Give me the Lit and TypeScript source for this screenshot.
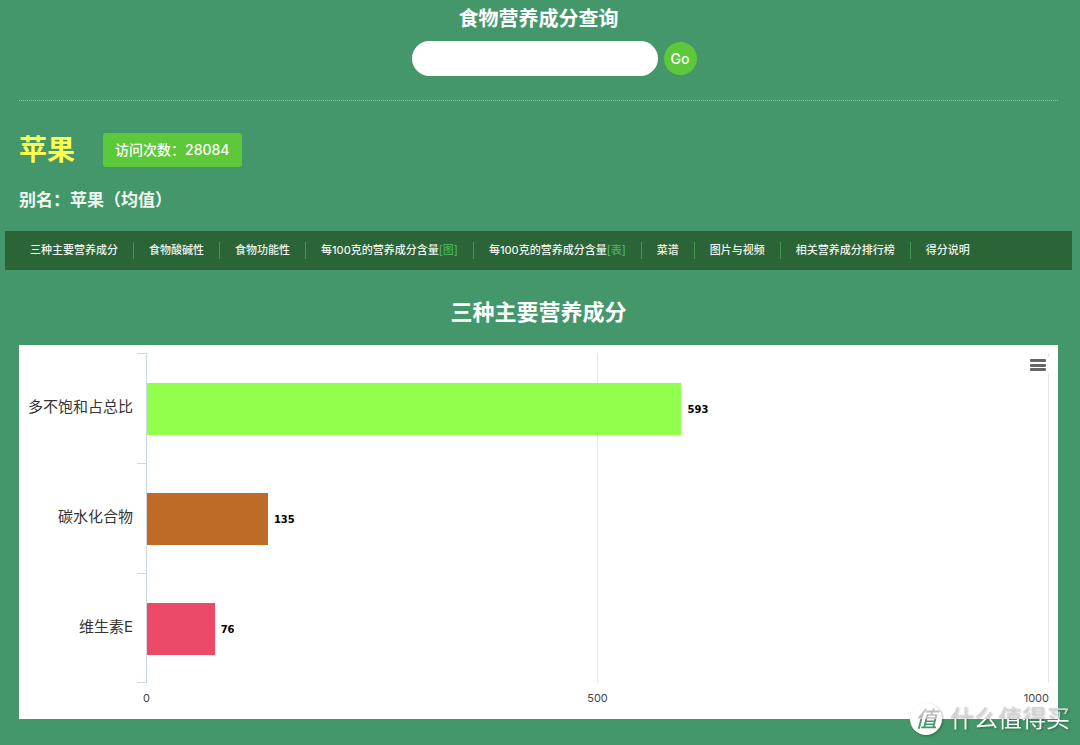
import { LitElement, html, css, svg } from "lit";
import { customElement, property } from "lit/decorators.js";
import { styleMap } from "lit/directives/style-map.js";

interface Bar {
  label: string;
  value: number;
  color: string;
}

interface NavLink {
  text: string;
  tag?: string;
  href: string;
}

@customElement("nutrient-chart")
class NutrientChart extends LitElement {
  @property({ attribute: false }) bars: Bar[] = [];
  @property({ type: Number }) max = 1000;

  static styles = css`
    :host {
      display: block;
      position: relative;
      background: #fff;
      padding: 8px 9px 13px 0;
      color: #333;
    }
    .row {
      display: grid;
      grid-template-columns: 127px 1fr;
    }
    .label {
      display: flex;
      align-items: center;
      justify-content: flex-end;
      padding: 0 13px 6px 0;
      font-size: 15px;
      background: linear-gradient(#ccd6eb, #ccd6eb) right top / 9px 1px no-repeat;
    }
    .row.last .label {
      background:
        linear-gradient(#ccd6eb, #ccd6eb) right top / 9px 1px no-repeat,
        linear-gradient(#ccd6eb, #ccd6eb) right bottom / 9px 1px no-repeat;
    }
    .track {
      display: flex;
      align-items: center;
      padding: 30px 0 28px;
      background:
        linear-gradient(#ccd6eb, #ccd6eb) left / 1px 100% no-repeat,
        linear-gradient(#e6e6e6, #e6e6e6) center / 1px 100% no-repeat,
        linear-gradient(#e6e6e6, #e6e6e6) right / 1px 100% no-repeat;
    }
    .bar {
      box-sizing: border-box;
      height: 52px;
      border-left: 1px solid #ccd6eb;
    }
    .value {
      padding: 2px 0 0 6px;
      font: bold 10px/12px "DejaVu Sans", sans-serif;
      color: #000;
    }
    .axis {
      display: grid;
      grid-template-columns: repeat(3, 1fr);
      margin-left: 127px;
      padding-top: 7px;
      font-size: 11px;
      line-height: 16px;
      color: #444;
    }
    .axis span:nth-child(1) {
      margin-left: -3px;
    }
    .axis span:nth-child(2) {
      text-align: center;
    }
    .axis span:nth-child(3) {
      text-align: right;
    }
    .menu {
      position: absolute;
      top: 8px;
      right: 4px;
      padding: 4px;
      border: 0;
      background: none;
      line-height: 0;
      cursor: pointer;
    }
  `;

  render() {
    return html`
      ${this.bars.map(
        (b, i) => html`
          <div class="row ${i === this.bars.length - 1 ? "last" : ""}">
            <div class="label">${b.label}</div>
            <div class="track">
              <div
                class="bar"
                style=${styleMap({ width: `${(b.value / this.max) * 100}%`, backgroundColor: b.color })}
              ></div>
              <span class="value">${b.value}</span>
            </div>
          </div>
        `
      )}
      <div class="axis"><span>0</span><span>${this.max / 2}</span><span>${this.max}</span></div>
      <button class="menu" aria-label="菜单">
        <svg width="24" height="16" viewBox="0 0 24 16">
          <rect width="24" height="16" fill="#fff" />
          ${[2, 7, 11].map(
            (y) => svg`<rect x="4" y=${y} width="16" height="3" rx="1" fill="#666" />`
          )}
        </svg>
      </button>
    `;
  }
}

@customElement("app-root")
class AppRoot extends LitElement {
  private links: NavLink[] = [
    { text: "三种主要营养成分", href: "#main" },
    { text: "食物酸碱性", href: "#acid" },
    { text: "食物功能性", href: "#function" },
    { text: "每100克的营养成分含量", tag: "[图]", href: "#chart" },
    { text: "每100克的营养成分含量", tag: "[表]", href: "#table" },
    { text: "菜谱", href: "#recipes" },
    { text: "图片与视频", href: "#media" },
    { text: "相关营养成分排行榜", href: "#ranking" },
    { text: "得分说明", href: "#score" },
  ];

  private bars: Bar[] = [
    { label: "多不饱和占总比", value: 593, color: "#93ff4d" },
    { label: "碳水化合物", value: 135, color: "#bd6b27" },
    { label: "维生素E", value: 76, color: "#ec4868" },
  ];

  static styles = css`
    :host {
      display: block;
      position: relative;
      box-sizing: border-box;
      min-height: 100vh;
      padding: 5px 22px 26px 19px;
      background: #44976a;
      color: #fff;
      font-family: Inter, "Noto Sans CJK SC", sans-serif;
    }
    h1,
    h2,
    h3,
    p {
      margin: 0;
    }
    .title {
      font-size: 20px;
      line-height: 28px;
      font-weight: 600;
      text-align: center;
    }
    .search {
      display: flex;
      justify-content: center;
      align-items: center;
      gap: 6px;
      padding: 8px 0 24px 31px;
      border-bottom: 1px dotted #74e84a;
    }
    .search input {
      box-sizing: border-box;
      width: 246px;
      height: 35px;
      padding: 0 16px;
      border: 0;
      border-radius: 18px;
      background: #fff;
      font: inherit;
      font-size: 14px;
    }
    .search button {
      width: 33px;
      height: 33px;
      padding: 0;
      border: 0;
      border-radius: 50%;
      background: #5cc83a;
      color: #fff;
      font: inherit;
      font-size: 14px;
      font-weight: 500;
    }
    .food {
      display: flex;
      align-items: center;
      gap: 28px;
      margin-top: 32px;
    }
    .food h2 {
      font-size: 28px;
      line-height: 34px;
      font-weight: 700;
      color: #ffff4d;
    }
    .visits {
      padding: 0 12px;
      border-radius: 3px;
      background: #5cc83a;
      font-size: 14px;
      line-height: 34px;
      font-weight: 500;
    }
    .alias {
      margin-top: 21px;
      font-size: 17px;
      line-height: 24px;
      font-weight: 600;
      color: #f0f7f2;
    }
    nav {
      display: flex;
      flex-wrap: wrap;
      margin: 19px -14px 0;
      padding: 11px 10px;
      background: #2a6437;
    }
    nav a {
      padding: 0 15px;
      border-left: 1px solid #3f9a50;
      font-size: 11px;
      line-height: 17px;
      font-weight: 500;
      color: #eef4ef;
      text-decoration: none;
    }
    nav a:first-child {
      border-left: 0;
    }
    nav em {
      font-style: normal;
      color: #4bb35c;
    }
    .section {
      margin: 26px 0 17px;
      font-size: 22px;
      line-height: 32px;
      font-weight: 600;
      text-align: center;
    }
    .mark {
      position: absolute;
      right: 10px;
      bottom: 10px;
      display: flex;
      align-items: center;
      gap: 8px;
      font-size: 24px;
      line-height: 32px;
      filter: drop-shadow(1px 1px 1px rgba(0, 0, 0, 0.3));
      pointer-events: none;
    }
    .words {
      background: linear-gradient(#d4d4d4 50%, #fff 50%);
      background-clip: text;
      -webkit-background-clip: text;
      color: transparent;
    }
    .seal {
      width: 32px;
      height: 32px;
      border-radius: 50%;
      background: #fff;
      text-align: center;
    }
    .glyph {
      display: block;
      background: linear-gradient(#bbb 50%, #44976a 50%);
      background-clip: text;
      -webkit-background-clip: text;
      color: transparent;
      font-size: 22px;
      font-style: italic;
      font-weight: 500;
    }
  `;

  render() {
    return html`
      <h1 class="title">食物营养成分查询</h1>
      <form class="search" @submit=${(e: Event) => e.preventDefault()}>
        <input type="text" aria-label="食物营养成分查询" />
        <button type="submit">Go</button>
      </form>
      <div class="food">
        <h2>苹果</h2>
        <span class="visits">访问次数：28084</span>
      </div>
      <p class="alias">别名：苹果（均值）</p>
      <nav>
        ${this.links.map(
          (l) => html`<a href=${l.href}>${l.text}${l.tag ? html`<em>${l.tag}</em>` : ""}</a>`
        )}
      </nav>
      <h3 class="section">三种主要营养成分</h3>
      <nutrient-chart .bars=${this.bars}></nutrient-chart>
      <div class="mark">
        <span class="seal"><span class="glyph">值</span></span>
        <span class="words">什么值得买</span>
      </div>
    `;
  }
}
